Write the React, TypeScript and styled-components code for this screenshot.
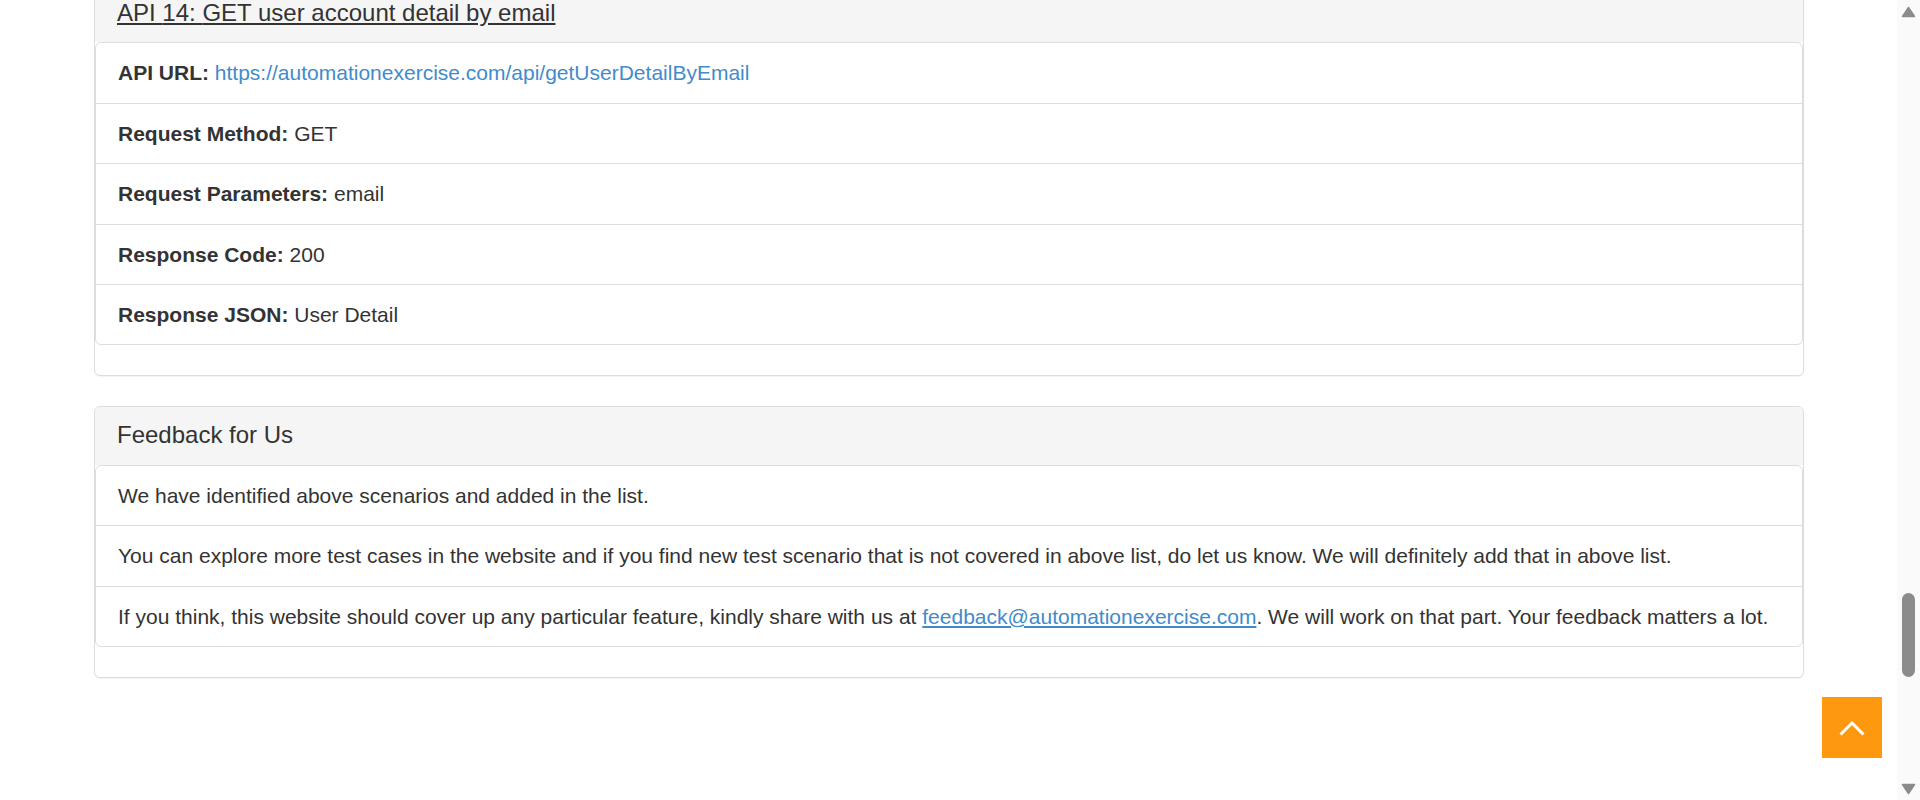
import React from "react";
import styled, { createGlobalStyle } from "styled-components";

const GlobalStyle = createGlobalStyle`
  html, body {
    margin: 0;
    padding: 0;
  }
  body {
    font-family: "Liberation Sans", Arial, Helvetica, sans-serif;
    font-size: 21px;
    line-height: 1.42857;
    color: #333;
    background: #fff;
  }
  * { box-sizing: border-box; }
`;

const Shell = styled.div`
  display: flex;
  height: 100vh;
  overflow: hidden;
`;

const Page = styled.main`
  flex: 1;
  min-width: 0;
  margin-top: -16px;
  padding: 0 93px 0 94px;
`;

const Panel = styled.section`
  background: #fff;
  border: 1px solid #ddd;
  border-radius: 6px;
  margin-bottom: 30px;
  box-shadow: 0 1px 1px rgba(0, 0, 0, 0.05);
`;

const Heading = styled.header`
  background: #f5f5f5;
  padding: 15px 22px;
  border-bottom: 1px solid transparent;
  border-radius: 5px 5px 0 0;
`;

const Title = styled.h4`
  margin: 0;
  font-size: 24px;
  font-weight: 400;
  line-height: 1.1;
  color: inherit;
`;

const TitleLink = styled.a<{ $active?: boolean }>`
  color: inherit;
  text-decoration: ${(p) => (p.$active ? "underline" : "none")};
  cursor: pointer;
`;

const List = styled.ul`
  list-style: none;
  margin: 0 0 30px;
  padding: 0;
  background: #fff;
  border: 1px solid #ddd;
  border-radius: 6px;
`;

const Item = styled.li`
  padding: 15px 22px;
  line-height: 29.4px;

  & + & {
    border-top: 1px solid #ddd;
  }
`;

const Label = styled.b`
  font-weight: 700;
`;

const Link = styled.a<{ $underline?: boolean }>`
  color: #428bca;
  text-decoration: ${(p) => (p.$underline ? "underline" : "none")};
`;

/* Page scrollbar (the view is scrolled near the end of a long list) */
const ScrollRail = styled.aside`
  width: 23px;
  flex: none;
  display: flex;
  flex-direction: column;
  background: #fafafa;
`;

const RailButton = styled.div`
  height: 23px;
  flex: none;
  display: flex;
  align-items: center;
  justify-content: center;
`;

const RailTrack = styled.div`
  flex: 1;
  position: relative;
`;

const RailThumb = styled.div`
  position: absolute;
  left: 5px;
  width: 13px;
  height: 84px;
  border-radius: 7px;
  background: #8b8b8b;
`;

const ScrollUp = styled.a`
  position: fixed;
  right: 38px;
  bottom: 42px;
  width: 60px;
  height: 61px;
  background: #fe980f;
  display: flex;
  align-items: center;
  justify-content: center;
  cursor: pointer;
`;

type Api = {
  number: number;
  title: string;
  path: string;
  rows: [string, string][];
};

const BASE = "https://automationexercise.com/api/";

const api14: Api = {
  number: 14,
  title: "GET user account detail by email",
  path: "getUserDetailByEmail",
  rows: [
    ["Request Method", "GET"],
    ["Request Parameters", "email"],
    ["Response Code", "200"],
    ["Response JSON", "User Detail"],
  ],
};

const feedback = {
  email: "feedback@automationexercise.com",
};

const SCROLL_RATIO = 0.85;

const ApiPanel: React.FC<{ api: Api; active?: boolean }> = ({ api, active }) => (
  <Panel>
    <Heading>
      <Title>
        <TitleLink $active={active}>
          API {api.number}: {api.title}
        </TitleLink>
      </Title>
    </Heading>
    <List>
      <Item>
        <Label>API URL:</Label> <Link href={BASE + api.path}>{BASE + api.path}</Link>
      </Item>
      {api.rows.map(([label, value]) => (
        <Item key={label}>
          <Label>{label}:</Label> {value}
        </Item>
      ))}
    </List>
  </Panel>
);

const ChevronUp = () => (
  <svg width="26" height="16" viewBox="0 0 26 16" aria-hidden="true">
    <polyline points="1.5,14.5 13,3 24.5,14.5" fill="none" stroke="#fff" strokeWidth="3" />
  </svg>
);

const RailArrow: React.FC<{ down?: boolean }> = ({ down }) => (
  <svg width="15" height="12" viewBox="0 0 15 12" aria-hidden="true">
    <polygon
      points={down ? "1.5,1.5 13.5,1.5 7.5,10.5" : "7.5,1.5 13.5,10.5 1.5,10.5"}
      fill="#8b8b8b"
      stroke="#8b8b8b"
      strokeWidth="1.5"
      strokeLinejoin="round"
    />
  </svg>
);

export default function App() {
  return (
    <>
      <GlobalStyle />
      <Shell>
        <Page>
          <ApiPanel api={api14} active />
          <Panel>
            <Heading>
              <Title>Feedback for Us</Title>
            </Heading>
            <List>
              <Item>We have identified above scenarios and added in the list.</Item>
              <Item>
                You can explore more test cases in the website and if you find new test scenario that is not covered in
                above list, do let us know. We will definitely add that in above list.
              </Item>
              <Item>
                If you think, this website should cover up any particular feature, kindly share with us at{" "}
                <Link $underline href={`mailto:${feedback.email}`}>
                  {feedback.email}
                </Link>
                . We will work on that part. Your feedback matters a lot.
              </Item>
            </List>
          </Panel>
        </Page>
        <ScrollRail aria-hidden="true">
          <RailButton>
            <RailArrow />
          </RailButton>
          <RailTrack>
            <RailThumb style={{ top: `calc((100% - 84px) * ${SCROLL_RATIO})` }} />
          </RailTrack>
          <RailButton>
            <RailArrow down />
          </RailButton>
        </ScrollRail>
      </Shell>
      <ScrollUp href="#top" aria-label="Scroll to top">
        <ChevronUp />
      </ScrollUp>
    </>
  );
}
